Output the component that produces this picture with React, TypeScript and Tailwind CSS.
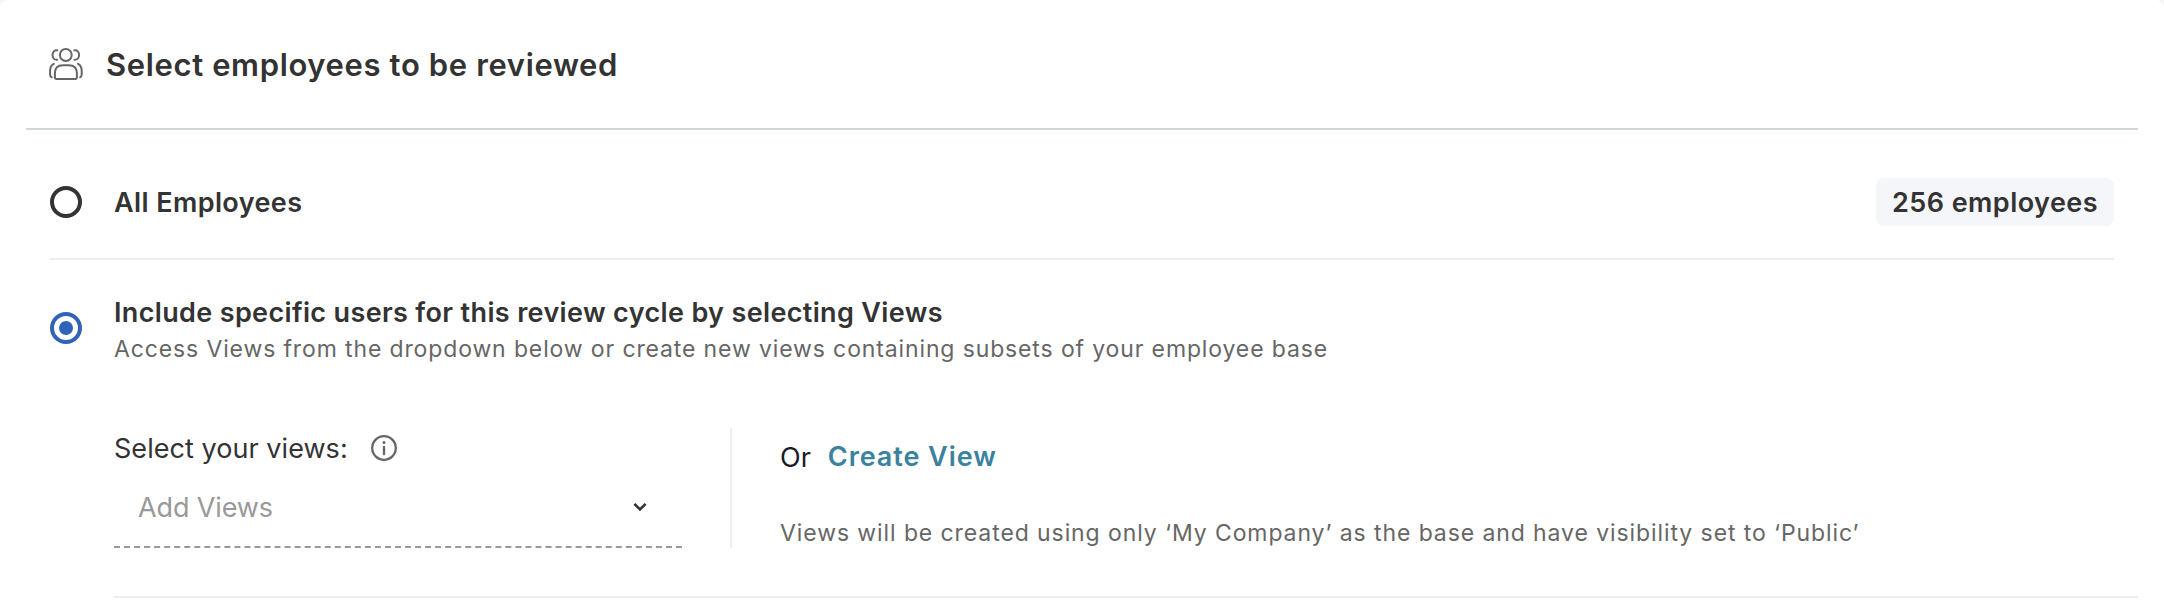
import type { ReactNode } from "react";

function PeopleIcon() {
  return (
    <svg
      className="h-[34px] w-[34px] shrink-0"
      viewBox="0 0 34 34"
      fill="none"
      stroke="#666666"
      strokeWidth="2"
      strokeLinecap="round"
      strokeLinejoin="round"
    >
      <circle cx="16.8" cy="8" r="5.9" />
      {/* side heads */}
      <path d="M8.2 3.3C5.4 3 3.5 5 3.5 8C3.5 11 5.4 13 8.2 12.7" />
      <path d="M25.4 3.3C28.2 3 30.1 5 30.1 8C30.1 11 28.2 13 25.4 12.7" />
      {/* bodies */}
      <path d="M14 18.2H19.7C24.8 18.2 27.9 21 27.9 26V30.2C27.9 31.3 27.3 31.9 26.2 31.9H7.6C6.5 31.9 5.9 31.3 5.9 30.2V26C5.9 21 9 18.2 14 18.2Z" />
      <path d="M4.8 16.8C2.3 18 1.1 20.4 1.1 23.6V27.4C1.1 28.8 1.6 29.8 2.7 30.3" />
      <path d="M29 16.8C31.5 18 32.7 20.4 32.7 23.6V27.4C32.7 28.8 32.2 29.8 31.1 30.3" />
    </svg>
  );
}

function InfoIcon() {
  return (
    <svg className="h-[26px] w-[26px]" viewBox="0 0 26 26" fill="none">
      <circle cx="13" cy="13" r="11.8" stroke="#666666" strokeWidth="2.3" />
      <circle cx="13" cy="7.6" r="1.5" fill="#666666" />
      <path d="M13 12V19" stroke="#666666" strokeWidth="2.4" strokeLinecap="round" />
    </svg>
  );
}

function Radio({ checked = false }: { checked?: boolean }) {
  return (
    <span
      className={`flex h-8 w-8 shrink-0 items-center justify-center rounded-full border-4 ${
        checked ? "border-[#3063b8]" : "border-[#333333]"
      }`}
    >
      {checked && <span className="h-[14px] w-[14px] rounded-full bg-[#3063b8]" />}
    </span>
  );
}

function Hint({ children }: { children: ReactNode }) {
  return <p className="text-[23px] leading-8 text-[#666666]">{children}</p>;
}

export default function App() {
  return (
    <div className="h-[614px] w-full bg-[#f5f5f5] font-['Inter',sans-serif] text-[#333333]">
      <section className="h-full rounded-t-lg bg-white">
        {/* Heading */}
        <header className="mx-[26px] flex h-[130px] items-center gap-[23px] border-b-2 border-[#d2d6dc] pl-[23px]">
          <PeopleIcon />
          <h1 className="pt-[3px] text-[31px] font-semibold tracking-[0.63px]">
            Select employees to be reviewed
          </h1>
        </header>

        {/* All employees */}
        <div className="mx-[50px] flex h-[130px] items-center border-b-2 border-[#ebeff4] pt-4">
          <Radio />
          <span className="ml-8 pt-0.5 text-[27px] font-semibold tracking-[0.4px]">All Employees</span>
          <span className="ml-auto flex h-12 items-center rounded-lg bg-[#f5f6f9] px-4 pt-0.5 text-[27px] font-semibold tracking-[0.45px]">
            256 employees
          </span>
        </div>

        {/* Specific users */}
        <div className="ml-[50px] flex items-start pt-[34px]">
          <div className="pt-[18px]">
            <Radio checked />
          </div>
          <div className="ml-8">
            <h2 className="pt-px text-[27px] leading-9 font-semibold tracking-[0.35px]">
              Include specific users for this review cycle by selecting Views
            </h2>
            <div className="pt-0.5 tracking-[0.87px]">
              <Hint>
                Access Views from the dropdown below or create new views containing subsets of your employee base
              </Hint>
            </div>
          </div>
        </div>

        <div className="mr-[26px] ml-[114px] flex border-b-2 border-[#ebeff4] pt-[63px] pb-12">
          <div className="w-[568px]">
            <div className="flex h-10 items-center gap-[23px]">
              <label className="pt-0.5 text-[27px] tracking-[0.05px]">Select your views:</label>
              <InfoIcon />
            </div>
            <div className="flex h-20 items-center justify-between border-b-2 border-dashed border-[#999999] pr-[35px] pl-6">
              <span className="pt-0.5 text-[27px] tracking-[-0.12px] text-[#999999]">Add Views</span>
              <svg className="h-[10px] w-[14px]" viewBox="0 0 14 10" fill="none">
                <path d="M1.4 1.8L7 7.4L12.6 1.8" stroke="#333333" strokeWidth="2.6" />
              </svg>
            </div>
          </div>

          <div className="ml-12 flex h-[120px] flex-col border-l-2 border-[#ebeff4] pt-2.5 pl-12">
            <div className="flex h-10 items-center gap-[17px] text-[27px]">
              <span className="text-[#1a1a2b]">Or</span>
              <a href="#" className="pb-px font-semibold tracking-[0.93px] text-[#3a829e]">
                Create View
              </a>
            </div>
            <div className="pt-[39px] tracking-[0.91px]">
              <Hint>
                Views will be created using only ‘My Company’ as the base and have visibility set to ‘Public’
              </Hint>
            </div>
          </div>
        </div>
      </section>
    </div>
  );
}
